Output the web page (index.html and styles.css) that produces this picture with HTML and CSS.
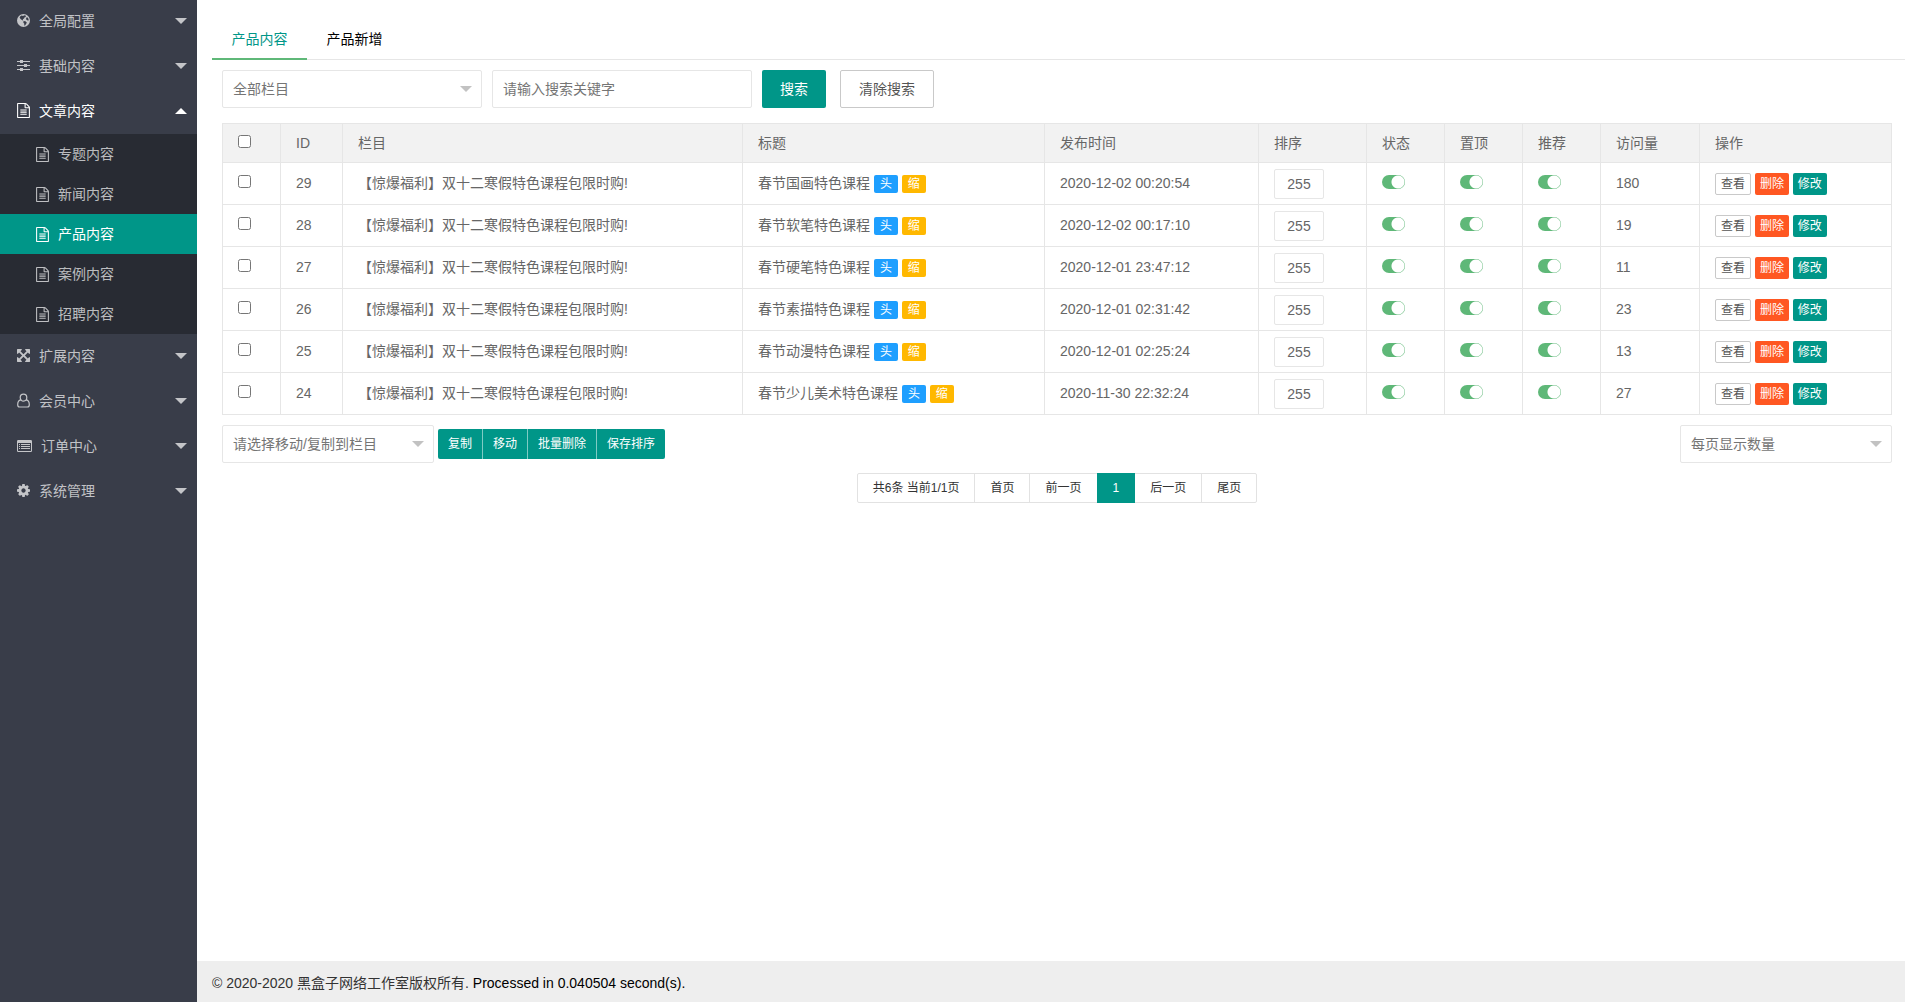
FILE: index.html
```html
<!DOCTYPE html>
<html lang="zh-CN">
<head>
<meta charset="utf-8">
<title>产品内容</title>
<link rel="stylesheet" href="styles.css">
</head>
<body>
<svg class="sprite" aria-hidden="true">
  <symbol id="i-doc" viewBox="0 0 1536 1792"><path d="M1468 380q28 28 48 76t20 88v1152q0 40-28 68t-68 28h-1344q-40 0-68-28t-28-68v-1600q0-40 28-68t68-28h896q40 0 88 20t76 48zm-444-244v376h376q-10-29-22-41l-313-313q-12-12-41-22zm384 1528v-1024h-416q-40 0-68-28t-28-68v-416h-768v1536h1280zm-1024-864q0-14 9-23t23-9h704q14 0 23 9t9 23v64q0 14-9 23t-23 9h-704q-14 0-23-9t-9-23v-64zm736 224q14 0 23 9t9 23v64q0 14-9 23t-23 9h-704q-14 0-23-9t-9-23v-64q0-14 9-23t23-9h704zm0 256q14 0 23 9t9 23v64q0 14-9 23t-23 9h-704q-14 0-23-9t-9-23v-64q0-14 9-23t23-9h704z"/></symbol>
  <symbol id="i-globe" viewBox="0 0 13 13"><path fill-rule="evenodd" d="M6.500 0a6.500 6.500 0 1 0 0 13a6.500 6.500 0 0 0 0-13zM4.600 1.500L6 1.900L7.400 1.300L9 1.700L8.600 3L7.400 3.600L7 4.600L5.800 5.200L6.200 6.400L5.200 6.200L3.600 5L2.600 3.400L3.400 2.200zM9.300 3.400L10.800 3.600L11.600 5.200L11.400 6.800L10.200 6.200L9 5.200zM6.600 7L8.400 7.200L9.800 8.400L9.200 9.800L8 11.400L7.200 11.600L7.300 9.800L6.300 8.400z"/></symbol>
  <symbol id="i-sliders" viewBox="0 0 13 13"><path d="M0 2h3v1H0zM6 2h7v1H6zM3 1h3v3H3zM0 6h7v1H0zM10 6h3v1h-3zM7 5h3v3H7zM0 10h3v1H0zM6 10h7v1H6zM3 9h3v3H3z"/></symbol>
  <symbol id="i-expand" viewBox="0 0 1536 1536"><path d="M1283 413l-355 355 355 355 144-144q29-31 70-14 39 17 39 59v448q0 26-19 45t-45 19h-448q-42 0-59-40-17-39 14-69l144-144-355-355-355 355 144 144q31 30 14 69-17 40-59 40h-448q-26 0-45-19t-19-45v-448q0-42 40-59 39-17 69 14l144 144 355-355-355-355-144 144q-19 19-45 19-12 0-24-5-40-17-40-59v-448q0-26 19-45t45-19h448q42 0 59 40 17 39-14 69l-144 144 355 355 355-355-144-144q-31-30-14-69 17-40 59-40h448q26 0 45 19t19 45v448q0 42-39 59-13 5-25 5-26 0-45-19z"/></symbol>
  <symbol id="i-user" viewBox="0 0 13 15"><path fill="none" stroke="currentColor" stroke-width="1.200" d="M6.500 1.100a3.300 3.500 0 1 1 0 7a3.300 3.500 0 1 1 0-7zM3.700 6.900C1.500 7.300.7 9.200.7 11.700C.7 13.200 1.500 14 2.700 14h7.600c1.200 0 2-.8 2-2.300c0-2.500-.8-4.400-3-4.800"/></symbol>
  <symbol id="i-list" viewBox="0 0 15 12"><path fill-rule="evenodd" d="M1.200 0h12.600Q15 0 15 1.200v9.600Q15 12 13.800 12H1.200Q0 12 0 10.800V1.200Q0 0 1.200 0zM1 3v7.500q0 .5.500.500h12q.5 0 .5-.5V3zM2 4h1v1H2zM4 4h9v1H4zM2 6h1v1H2zM4 6h9v1H4zM2 8h1v1H2zM4 8h9v1H4z"/></symbol>
  <symbol id="i-cog" viewBox="128 128 1536 1536"><path d="M1152 896q0-106-75-181t-181-75-181 75-75 181 75 181 181 75 181-75 75-181zm512-109v222q0 12-8 23t-20 13l-185 28q-19 54-39 91 35 50 107 138 10 12 10 25t-9 23q-27 37-99 108t-94 71q-12 0-26-9l-138-108q-44 23-91 38-16 136-29 186-7 28-36 28h-222q-14 0-24.500-8.500t-11.500-21.500l-28-184q-49-16-90-37l-141 107q-10 9-25 9-14 0-25-11-126-114-165-168-7-10-7-23 0-12 8-23 15-21 51-66.500t54-70.500q-27-50-41-99l-183-27q-13-2-21-12.500t-8-23.500v-222q0-12 8-23t19-13l186-28q14-46 39-92-40-57-107-138-10-12-10-24 0-10 9-23 26-36 98.500-107.500t94.500-71.500q13 0 26 10l138 107q44-23 91-38 16-136 29-186 7-28 36-28h222q14 0 24.500 8.500t11.500 21.500l28 184q49 16 90 37l142-107q9-9 24-9 13 0 25 10 129 119 165 170 7 8 7 22 0 12-8 23-15 21-51 66.500t-54 70.500q26 50 41 98l183 28q13 2 21 12.500t8 23.500z"/></symbol>
</svg>

<div class="layout">
  <nav class="sidebar">
    <ul class="menu">
      <li><a class="menu-link" href="#"><svg class="icon"><use href="#i-globe"/></svg>全局配置<span class="caret"></span></a></li>
      <li><a class="menu-link" href="#"><svg class="icon"><use href="#i-sliders"/></svg>基础内容<span class="caret"></span></a></li>
      <li>
        <a class="menu-link open" href="#"><svg class="icon icon-tall"><use href="#i-doc"/></svg>文章内容<span class="caret"></span></a>
        <ul class="submenu">
          <li><a class="sub-link" href="#"><svg class="icon icon-tall"><use href="#i-doc"/></svg>专题内容</a></li>
          <li><a class="sub-link" href="#"><svg class="icon icon-tall"><use href="#i-doc"/></svg>新闻内容</a></li>
          <li><a class="sub-link current" href="#"><svg class="icon icon-tall"><use href="#i-doc"/></svg>产品内容</a></li>
          <li><a class="sub-link" href="#"><svg class="icon icon-tall"><use href="#i-doc"/></svg>案例内容</a></li>
          <li><a class="sub-link" href="#"><svg class="icon icon-tall"><use href="#i-doc"/></svg>招聘内容</a></li>
        </ul>
      </li>
      <li><a class="menu-link" href="#"><svg class="icon"><use href="#i-expand"/></svg>扩展内容<span class="caret"></span></a></li>
      <li><a class="menu-link" href="#"><svg class="icon icon-tall"><use href="#i-user"/></svg>会员中心<span class="caret"></span></a></li>
      <li><a class="menu-link" href="#"><svg class="icon icon-wide"><use href="#i-list"/></svg>订单中心<span class="caret"></span></a></li>
      <li><a class="menu-link" href="#"><svg class="icon"><use href="#i-cog"/></svg>系统管理<span class="caret"></span></a></li>
    </ul>
  </nav>

  <div class="page">
    <main class="main">
      <div class="tabs">
        <a class="tab active" href="#">产品内容</a>
        <a class="tab" href="#">产品新增</a>
      </div>

      <div class="content">
        <form class="search">
          <span class="select-box field"><select aria-label="全部栏目"><option>全部栏目</option></select></span>
          <input class="text-input field" type="text" placeholder="请输入搜索关键字" aria-label="请输入搜索关键字">
          <div class="search-actions">
            <button class="btn" type="button">搜索</button>
            <button class="btn btn-plain" type="button">清除搜索</button>
          </div>
        </form>

        <table class="data">
          <colgroup>
            <col class="c-check"><col class="c-id"><col class="c-cat"><col class="c-title"><col class="c-time"><col class="c-sort"><col class="c-flag"><col class="c-flag"><col class="c-flag"><col class="c-visits"><col class="c-ops">
          </colgroup>
          <thead>
            <tr><th><input type="checkbox" aria-label="全选"></th><th>ID</th><th>栏目</th><th>标题</th><th>发布时间</th><th>排序</th><th>状态</th><th>置顶</th><th>推荐</th><th>访问量</th><th>操作</th></tr>
          </thead>
          <tbody>
            <tr>
              <td><input type="checkbox" aria-label="29"></td><td>29</td><td>【惊爆福利】双十二寒假特色课程包限时购!</td>
              <td>春节国画特色课程 <span class="badge blue">头</span> <span class="badge orange">缩</span></td><td>2020-12-02 00:20:54</td>
              <td class="control"><input class="sort-input" type="text" value="255" aria-label="排序"></td>
              <td class="control"><input class="toggle" type="checkbox" checked aria-label="状态"></td><td class="control"><input class="toggle" type="checkbox" checked aria-label="置顶"></td><td class="control"><input class="toggle" type="checkbox" checked aria-label="推荐"></td>
              <td>180</td><td class="control"><a class="op op-view" href="#">查看</a> <a class="op op-del" href="#">删除</a> <a class="op op-edit" href="#">修改</a></td>
            </tr>
            <tr>
              <td><input type="checkbox" aria-label="28"></td><td>28</td><td>【惊爆福利】双十二寒假特色课程包限时购!</td>
              <td>春节软笔特色课程 <span class="badge blue">头</span> <span class="badge orange">缩</span></td><td>2020-12-02 00:17:10</td>
              <td class="control"><input class="sort-input" type="text" value="255" aria-label="排序"></td>
              <td class="control"><input class="toggle" type="checkbox" checked aria-label="状态"></td><td class="control"><input class="toggle" type="checkbox" checked aria-label="置顶"></td><td class="control"><input class="toggle" type="checkbox" checked aria-label="推荐"></td>
              <td>19</td><td class="control"><a class="op op-view" href="#">查看</a> <a class="op op-del" href="#">删除</a> <a class="op op-edit" href="#">修改</a></td>
            </tr>
            <tr>
              <td><input type="checkbox" aria-label="27"></td><td>27</td><td>【惊爆福利】双十二寒假特色课程包限时购!</td>
              <td>春节硬笔特色课程 <span class="badge blue">头</span> <span class="badge orange">缩</span></td><td>2020-12-01 23:47:12</td>
              <td class="control"><input class="sort-input" type="text" value="255" aria-label="排序"></td>
              <td class="control"><input class="toggle" type="checkbox" checked aria-label="状态"></td><td class="control"><input class="toggle" type="checkbox" checked aria-label="置顶"></td><td class="control"><input class="toggle" type="checkbox" checked aria-label="推荐"></td>
              <td>11</td><td class="control"><a class="op op-view" href="#">查看</a> <a class="op op-del" href="#">删除</a> <a class="op op-edit" href="#">修改</a></td>
            </tr>
            <tr>
              <td><input type="checkbox" aria-label="26"></td><td>26</td><td>【惊爆福利】双十二寒假特色课程包限时购!</td>
              <td>春节素描特色课程 <span class="badge blue">头</span> <span class="badge orange">缩</span></td><td>2020-12-01 02:31:42</td>
              <td class="control"><input class="sort-input" type="text" value="255" aria-label="排序"></td>
              <td class="control"><input class="toggle" type="checkbox" checked aria-label="状态"></td><td class="control"><input class="toggle" type="checkbox" checked aria-label="置顶"></td><td class="control"><input class="toggle" type="checkbox" checked aria-label="推荐"></td>
              <td>23</td><td class="control"><a class="op op-view" href="#">查看</a> <a class="op op-del" href="#">删除</a> <a class="op op-edit" href="#">修改</a></td>
            </tr>
            <tr>
              <td><input type="checkbox" aria-label="25"></td><td>25</td><td>【惊爆福利】双十二寒假特色课程包限时购!</td>
              <td>春节动漫特色课程 <span class="badge blue">头</span> <span class="badge orange">缩</span></td><td>2020-12-01 02:25:24</td>
              <td class="control"><input class="sort-input" type="text" value="255" aria-label="排序"></td>
              <td class="control"><input class="toggle" type="checkbox" checked aria-label="状态"></td><td class="control"><input class="toggle" type="checkbox" checked aria-label="置顶"></td><td class="control"><input class="toggle" type="checkbox" checked aria-label="推荐"></td>
              <td>13</td><td class="control"><a class="op op-view" href="#">查看</a> <a class="op op-del" href="#">删除</a> <a class="op op-edit" href="#">修改</a></td>
            </tr>
            <tr>
              <td><input type="checkbox" aria-label="24"></td><td>24</td><td>【惊爆福利】双十二寒假特色课程包限时购!</td>
              <td>春节少儿美术特色课程 <span class="badge blue">头</span> <span class="badge orange">缩</span></td><td>2020-11-30 22:32:24</td>
              <td class="control"><input class="sort-input" type="text" value="255" aria-label="排序"></td>
              <td class="control"><input class="toggle" type="checkbox" checked aria-label="状态"></td><td class="control"><input class="toggle" type="checkbox" checked aria-label="置顶"></td><td class="control"><input class="toggle" type="checkbox" checked aria-label="推荐"></td>
              <td>27</td><td class="control"><a class="op op-view" href="#">查看</a> <a class="op op-del" href="#">删除</a> <a class="op op-edit" href="#">修改</a></td>
            </tr>
          </tbody>
        </table>

        <div class="bulk">
          <span class="select-box bulk-select"><select aria-label="请选择移动/复制到栏目"><option>请选择移动/复制到栏目</option></select></span>
          <div class="btn-group">
            <button type="button">复制</button><button type="button">移动</button><button type="button">批量删除</button><button type="button">保存排序</button>
          </div>
          <span class="select-box bulk-select page-size"><select aria-label="每页显示数量"><option>每页显示数量</option></select></span>
        </div>

        <div class="pager">
          <span>共6条 当前1/1页</span><a href="#">首页</a><a href="#">前一页</a><span class="on">1</span><a href="#">后一页</a><a href="#">尾页</a>
        </div>
      </div>
    </main>
    <footer class="footer">© 2020-2020 黑盒子网络工作室版权所有. <span class="timing">Processed in 0.040504 second(s).</span></footer>
  </div>
</div>
</body>
</html>
```
FILE: styles.css
```css
* { box-sizing: border-box; }
body {
  margin: 0;
  font: 14px/20px "Liberation Sans", "Noto Sans CJK SC", sans-serif;
  color: #333;
  background: #fff;
}
a { color: inherit; text-decoration: none; }
ul { list-style: none; margin: 0; padding: 0; }
input, select, button { font: inherit; margin: 0; }
.sprite { display: none; }

.layout { display: flex; min-height: 100vh; }

/* sidebar */
.sidebar { flex: none; width: 197px; background: #393d49; }
.menu { margin-top: -1px; }
.menu-link, .sub-link {
  display: flex;
  align-items: center;
  gap: 9px;
  color: rgba(255, 255, 255, .7);
}
.menu-link { height: 45px; padding: 0 10px 2px 17px; }
.sub-link { height: 40px; padding-left: 36px; }
.submenu { background: #282b33; }
.menu-link.open, .sub-link.current { color: #fff; }
.sub-link.current { background: #009688; }
.icon { flex: none; width: 13px; height: 13px; fill: currentColor; }
.icon-tall { height: 15px; }
.icon-wide { width: 15px; height: 12px; }
.caret {
  margin-left: auto;
  border: 6px solid transparent;
  border-top-color: currentColor;
  border-bottom: 0;
}
.open .caret { border-top: 0; border-bottom: 6px solid currentColor; }

/* page */
.page { flex: 1; min-width: 0; display: flex; flex-direction: column; }
.main { flex: 1; padding: 20px 0 0 15px; }
.tabs { display: flex; height: 40px; border-bottom: 1px solid #e6e6e6; }
.tab {
  min-width: 95px;
  height: 40px;
  padding: 0 15px;
  line-height: 38px;
  text-align: center;
  color: #000;
}
.tab.active { color: #009688; border-bottom: 2px solid #5fb878; }
.content { padding: 10px 13px 0 10px; }

.search { display: flex; gap: 10px; margin-bottom: 15px; }
.search-actions { display: flex; gap: 14px; }
.field { width: 260px; }
.select-box { position: relative; display: block; height: 38px; }
.select-box select {
  appearance: none;
  width: 100%;
  height: 100%;
  padding: 0 30px 0 10px;
  border: 1px solid #e6e6e6;
  border-radius: 2px;
  background: #fff;
  color: #757575;
}
.select-box::after {
  content: "";
  position: absolute;
  right: 10px;
  top: 16px;
  border: 6px solid transparent;
  border-top-color: #c2c2c2;
  border-bottom: 0;
  pointer-events: none;
}
.text-input {
  height: 38px;
  padding: 0 10px;
  border: 1px solid #e6e6e6;
  border-radius: 2px;
}
.text-input::placeholder { color: #757575; }
.btn {
  height: 38px;
  padding: 0 18px;
  border: 0;
  border-radius: 2px;
  background: #009688;
  color: #fff;
}
.btn-plain { border: 1px solid #c9c9c9; background: #fff; color: #555; }

/* table */
.data {
  width: 100%;
  table-layout: fixed;
  border-collapse: collapse;
  color: #666;
}
.data th, .data td {
  padding: 0 15px;
  border: 1px solid #e6e6e6;
  text-align: left;
  font-weight: 400;
  white-space: nowrap;
}
.data th { height: 39px; background: #f2f2f2; }
.data td { height: 42px; padding-bottom: 2px; }
.data .control { padding-bottom: 0; }
.c-check { width: 58px; }
.c-id { width: 62px; }
.c-title { width: 302px; }
.c-time { width: 214px; }
.c-sort { width: 108px; }
.c-flag { width: 78px; }
.c-visits { width: 99px; }
.c-ops { width: 192px; }
.badge {
  display: inline-block;
  height: 18px;
  padding: 0 6px;
  border-radius: 2px;
  font-size: 12px;
  line-height: 18px;
  color: #fff;
}
.blue { background: #1e9fff; }
.orange { background: #ffb800; }
.sort-input {
  display: block;
  width: 50px;
  height: 30px;
  padding: 0;
  border: 1px solid #e6e6e6;
  border-radius: 2px;
  text-align: center;
  color: #666;
}
.toggle {
  appearance: none;
  display: inline-block;
  width: 23px;
  height: 14px;
  border-radius: 7px;
  background: radial-gradient(circle at 16px 7px, #fff 6px, #5fb878 7px);
}
.op {
  display: inline-block;
  height: 22px;
  padding: 0 5px;
  border-radius: 2px;
  font-size: 12px;
  line-height: 22px;
  color: #fff;
}
.op-view { border: 1px solid #c9c9c9; line-height: 20px; color: #555; }
.op-del { background: #ff5722; }
.op-edit { background: #009688; }

/* bulk actions and pager */
.bulk { display: flex; align-items: center; gap: 4px; margin-top: 10px; }
.bulk-select { width: 212px; }
.page-size { margin-left: auto; }
.btn-group { display: flex; border-radius: 2px; overflow: hidden; }
.btn-group button {
  height: 30px;
  padding: 0 10px;
  border: 0;
  background: #009688;
  color: #fff;
  font-size: 12px;
}
.btn-group button + button { border-left: 1px solid rgba(255, 255, 255, .5); }
.pager {
  display: flex;
  justify-content: center;
  margin: 10px 0;
  font-size: 12px;
  line-height: 28px;
}
.pager > * { padding: 0 15px; border: 1px solid #e2e2e2; }
.pager > * + * { margin-left: -1px; }
.pager > :first-child { border-radius: 2px 0 0 2px; }
.pager > :last-child { border-radius: 0 2px 2px 0; }
.pager .on { z-index: 1; border-color: #009688; background: #009688; color: #fff; }

.footer { padding: 12px 15px 9px; background: #eee; }
.timing { color: #000; }
```
